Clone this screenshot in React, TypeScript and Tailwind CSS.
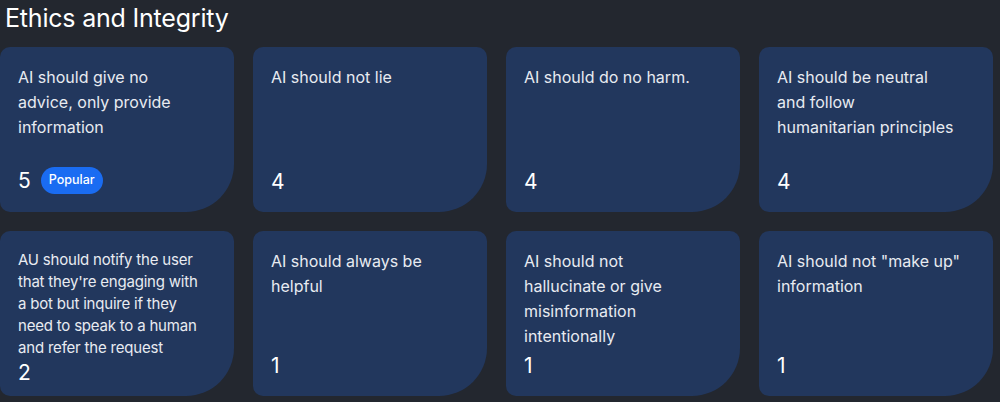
const cards = [
  { lines: ["AI should give no", "advice, only provide", "information"], count: 5, popular: true },
  { lines: ["AI should not lie"], count: 4 },
  { lines: ["AI should do no harm."], count: 4 },
  { lines: ["AI should be neutral", "and follow", "humanitarian principles"], count: 4 },
  {
    lines: [
      "AU should notify the user",
      "that they're engaging with",
      "a bot but inquire if they",
      "need to speak to a human",
      "and refer the request",
    ],
    count: 2,
    compact: true,
  },
  { lines: ["AI should always be", "helpful"], count: 1 },
  { lines: ["AI should not", "hallucinate or give", "misinformation", "intentionally"], count: 1 },
  { lines: ['AI should not "make up"', "information"], count: 1 },
];

type CardProps = { lines: string[]; count: number; popular?: boolean; compact?: boolean };

const Card = ({ lines, count, popular, compact }: CardProps) => (
  <div
    className={`flex flex-col justify-between bg-[#22375d] rounded-tl-[10px] rounded-tr-[10px] rounded-bl-[10px] rounded-br-[48px] pl-[18px] ${
      compact ? "pt-[18px] pb-[11px]" : "pt-[18px] pb-[18px]"
    }`}
  >
    <p
      className={`text-[#e8ebf1] whitespace-nowrap ${
        compact ? "text-[15px] leading-[22px] tracking-[-0.2px]" : "text-[16px] leading-[25px]"
      }`}
    >
      {lines.map((l, i) => (
        <span key={i} className="block">
          {l}
        </span>
      ))}
    </p>
    <div className="flex items-center gap-[10px]">
      <span className="text-[21px] leading-[24px] text-white">{count}</span>
      {popular && (
        <span className="bg-[#1a6cf2] text-white text-[12.5px] font-medium rounded-full px-[8px] h-[27px] flex items-center">
          Popular
        </span>
      )}
    </div>
  </div>
);

export default function App() {
  return (
    <div className="w-[1000px] h-[402px] bg-[#23272f] overflow-hidden font-['Inter',sans-serif]">
      <h1 className="text-[25px] leading-[28px] text-white pl-[5px] pt-[4px] tracking-[-0.2px]">Ethics and Integrity</h1>
      <div className="grid grid-cols-4 gap-x-[19px] gap-y-[19px] w-[993px] mt-[15px] auto-rows-[165px]">
        {cards.map((c, i) => (
          <Card key={i} {...c} />
        ))}
      </div>
    </div>
  );
}
